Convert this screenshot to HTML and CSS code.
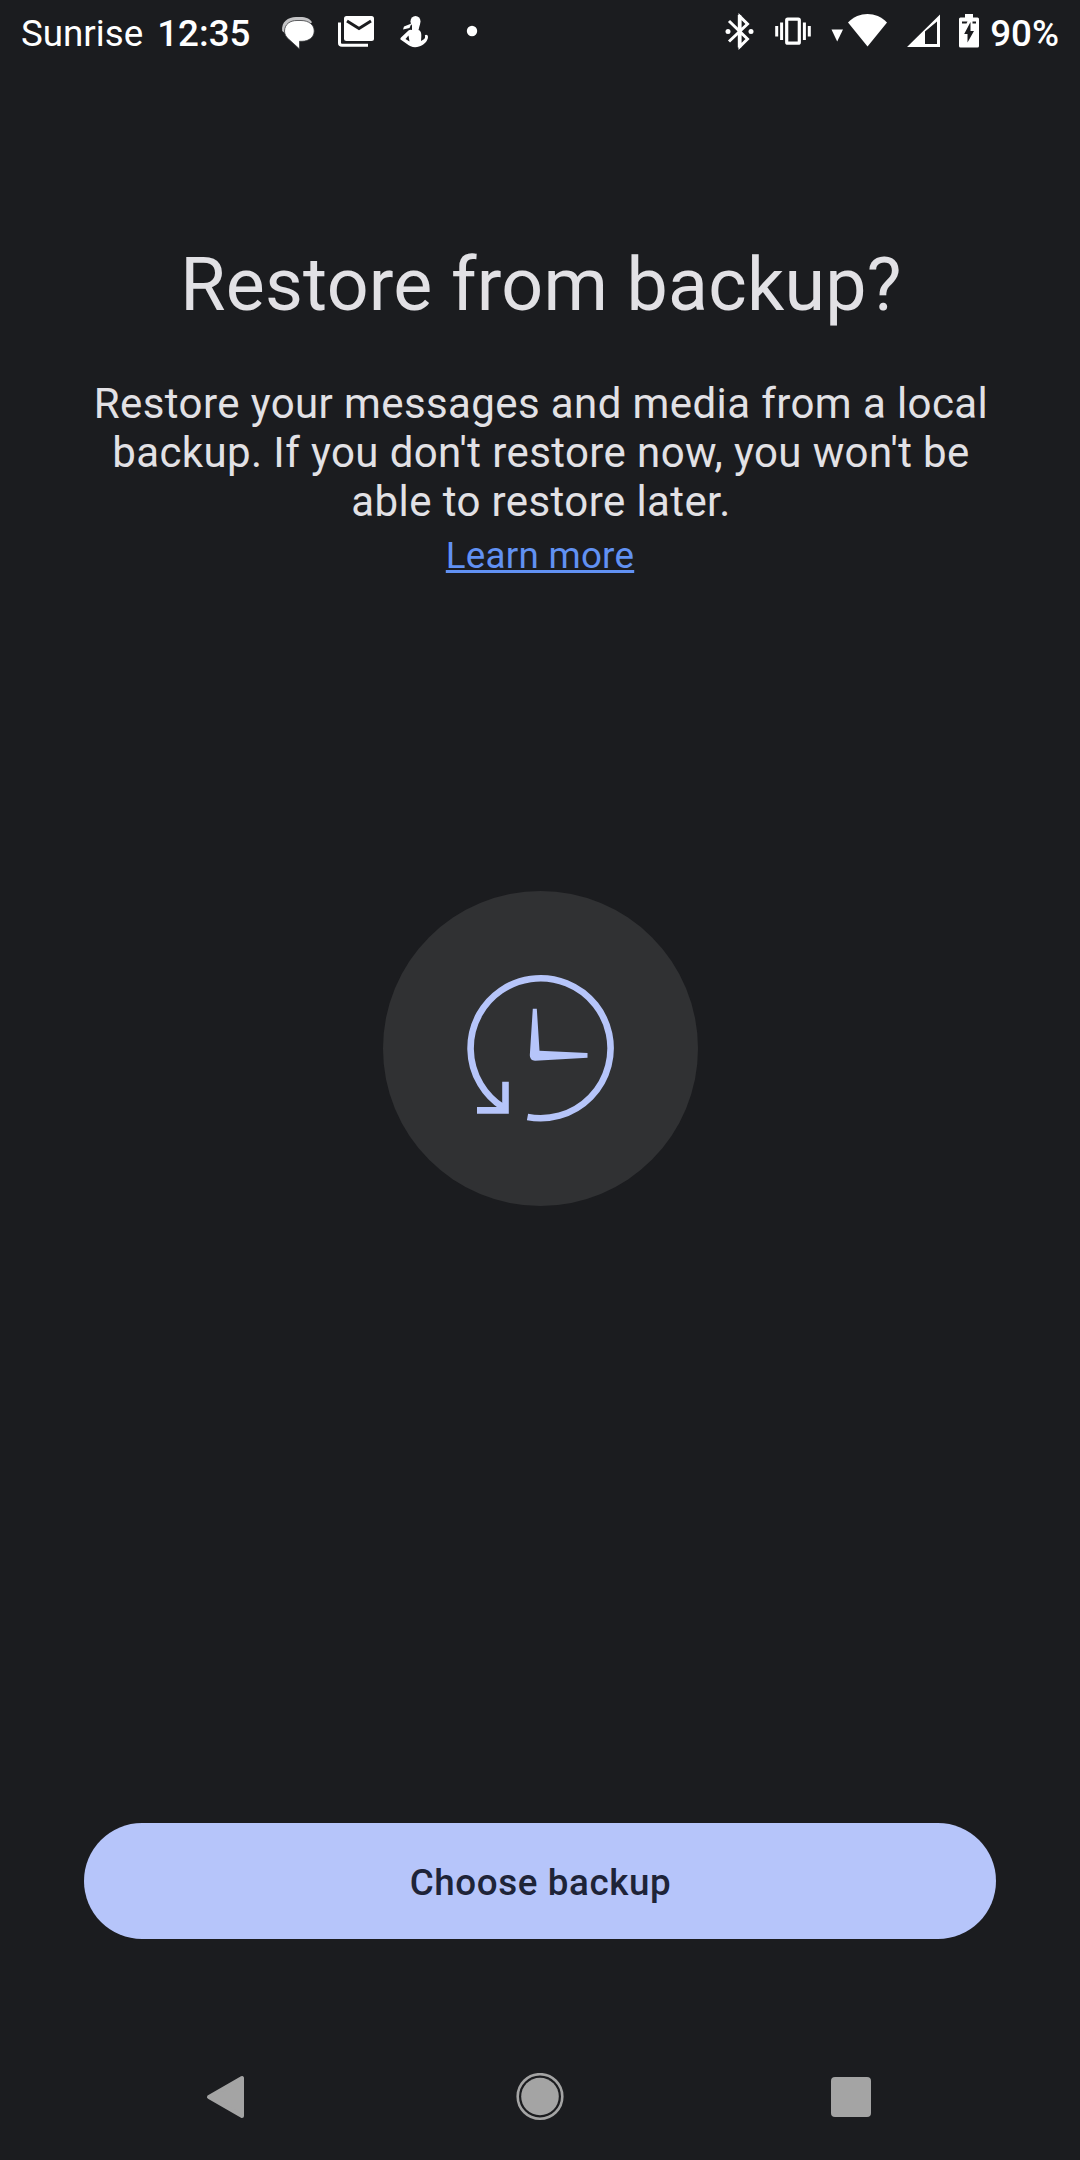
FILE: index.html
```html
<!DOCTYPE html>
<html lang="en">
<head>
<meta charset="utf-8">
<title>Restore from backup</title>
<link rel="stylesheet" href="styles.css">
</head>
<body>
<div class="screen">
  <header class="status-bar">
    <div class="status-left">
      <span class="carrier">Sunrise</span>
      <span class="clock">12:35</span>
      <svg class="notifications" width="220" height="66" viewBox="0 0 220 66">
        <path fill="#c4c4c6" d="M22.200 31C21 22 28 17 36 17H40C46 17 50 18.500 52 22.500L26 34Z"/>
        <path fill="#fff" stroke="#3a3b3e" stroke-width="0.800" d="M37 20.500H41C49 20.500 54.200 25 54.200 31C54.200 37 49 41.300 42 41.300H39.500V49L28.500 39C26 37 24.500 34 24.500 31C24.800 24 30 20.500 37 20.500Z"/>
        <path fill="none" stroke="#fff" stroke-width="3" d="M79.500 22.500V43Q79.500 45.300 82 45.300H108"/>
        <rect x="84" y="16" width="30" height="25" rx="2.500" fill="#fff"/>
        <path fill="none" stroke="#1b1c1f" stroke-width="3" d="M87 21L99 28.500L111 21"/>
        <g fill="#fff">
          <ellipse cx="155.500" cy="21.500" rx="5" ry="5.500"/>
          <path d="M152 24L160 24L158.500 30C162 31 161.500 36 161 41L163.500 39.500C165 38.500 165.500 37 164.800 35.500C165.500 34 168 34.500 168 37C168 41 163 46 159 46.500C155 48 150 47 147 44L140.500 39.500Q140 38.500 141 37.500L148.500 30.500Q150 29.500 152 30Z"/>
          <path d="M151.500 23.500L144 26.500L143 29.500L149.500 28Z"/>
        </g>
        <path fill="#1b1c1f" d="M148.500 35.500L145.500 39L149.500 41.500Z"/>
        <circle cx="212" cy="31" r="5.200" fill="#fff"/>
      </svg>
    </div>
    <div class="status-right">
      <svg class="indicators" width="264" height="66" viewBox="0 0 264 66">
        <path fill="none" stroke="#fff" stroke-width="3" d="M9 21L27.500 39L20 46.500V43L20 16.500L27.500 24L9 41.500"/>
        <path fill="none" stroke="#fff" stroke-width="3.400" d="M19.500 15V47.500"/>
        <circle cx="8" cy="31.500" r="2.500" fill="#fff"/>
        <circle cx="31" cy="31.500" r="2.500" fill="#fff"/>
        <rect x="66.700" y="19.200" width="12.600" height="24" rx="1" fill="none" stroke="#fff" stroke-width="3.200"/>
        <path stroke="#fff" stroke-width="3" d="M56.700 26V36.500M61.600 22.500V40M84.400 22.500V40M89.300 26V36.500"/>
        <path fill="#fff" d="M111.500 29.500H123L117.200 41.500Z"/>
        <path fill="#fff" d="M128 22.500C139 11.200 156 11.200 167 22.500L147.500 46.500Z"/>
        <path fill="#fff" fill-rule="evenodd" d="M187 47L220 14.500V47ZM205 31.500V44H217V21.500Z"/>
        <path fill="#fff" d="M241 17.500H245V14H253V17.500H257.500Q259 17.500 259 19V46Q259 47.500 257.500 47.500H240.500Q239 47.500 239 46V19Q239 17.500 240.500 17.500Z"/>
        <path fill="#1b1c1f" d="M250.500 22V31H254L247.500 42.500V34H244.200Z"/>
        <path fill="#1b1c1f" d="M242 21.500H247.500L246.500 23.500H242ZM252.500 21.500H256V23.500H252.500Z"/>
      </svg>
      <span class="battery-level">90%</span>
    </div>
  </header>

  <main class="content">
    <h1 class="title">Restore from backup?</h1>
    <p class="description">Restore your messages and media from a local<br>backup. If you don't restore now, you won't be<br>able to restore later.</p>
    <a class="learn-more" href="#">Learn more</a>

    <div class="illustration">
      <svg width="315" height="315" viewBox="0.500 0.300 315 315">
        <path fill="none" stroke="#b6c5fa" stroke-width="6.600" d="M120.200 216.400A70 70 0 1 1 145 226.300"/>
        <path fill="none" stroke="#b6c5fa" stroke-width="6.600" d="M94.500 219.700H123V191"/>
        <path fill="#b6c5fa" d="M150.300 118H154.300L157 160L205 162.300V167L152.500 170Q147.300 169.500 147.300 164.500Z"/>
      </svg>
    </div>

    <button class="primary-button" type="button">Choose backup</button>
  </main>

  <nav class="nav-bar">
    <svg width="48" height="48" viewBox="0 0 48 48"><path fill="#a4a4a4" stroke="#a4a4a4" stroke-width="4" stroke-linejoin="round" d="M8 24L41 5V43Z"/></svg>
    <svg width="48" height="48" viewBox="0 0 48 48"><circle cx="24" cy="23.500" r="22.300" fill="none" stroke="#a4a4a4" stroke-width="2.600"/><circle cx="24" cy="23.500" r="18.800" fill="#a4a4a4"/></svg>
    <svg width="48" height="48" viewBox="0 0 48 48"><rect x="4" y="4" width="40" height="40" rx="4" fill="#a4a4a4"/></svg>
  </nav>
</div>
</body>
</html>
```
FILE: styles.css
```css
* { box-sizing: border-box; }

body {
  margin: 0;
  background: #1b1c1f;
  font-family: Roboto, "Noto Sans", sans-serif;
}

.screen {
  width: 1080px;
  height: 2160px;
  display: flex;
  flex-direction: column;
  overflow: hidden;
  color: #e2e1e5;
}

.status-bar {
  height: 66px;
  display: flex;
  justify-content: space-between;
  padding: 0 21px;
  color: #fff;
  font-size: 36.75px;
  line-height: 67px;
}

.status-left,
.status-right {
  display: flex;
}

.clock {
  margin-left: 14px;
  font-weight: 500;
}

.notifications {
  margin-left: 10px;
}

.indicators {
  margin-right: 6px;
}

.battery-level {
  font-weight: 500;
}

.content {
  flex: 1;
  display: flex;
  flex-direction: column;
  align-items: center;
}

.title {
  margin: 176px 0 0;
  padding-left: 2px;
  font-size: 73.5px;
  font-weight: 400;
  line-height: 86px;
  letter-spacing: 0.25px;
}

.description {
  margin: 51px 0 0;
  padding-left: 2px;
  font-size: 42px;
  line-height: 49px;
  letter-spacing: 0.4px;
  text-align: center;
}

.learn-more {
  margin-top: 8px;
  color: #6191f3;
  font-size: 36.75px;
  line-height: 43px;
  letter-spacing: 0.25px;
}

.illustration {
  width: 315px;
  height: 315px;
  margin: 314px 0 0 1px;
  border-radius: 50%;
  background: #303133;
}

.primary-button {
  width: 912px;
  height: 116px;
  margin-top: 617px;
  padding: 2px 0 0 1px;
  border: 0;
  border-radius: 58px;
  background: #b6c5fa;
  color: #1e2438;
  font: 500 36.75px Roboto, sans-serif;
  letter-spacing: 0.6px;
}

.nav-bar {
  height: 126px;
  display: flex;
  justify-content: space-between;
  align-items: center;
  padding: 0 205px 0 201px;
}

.nav-bar svg:nth-child(2) {
  margin-left: 3px;
}
```
